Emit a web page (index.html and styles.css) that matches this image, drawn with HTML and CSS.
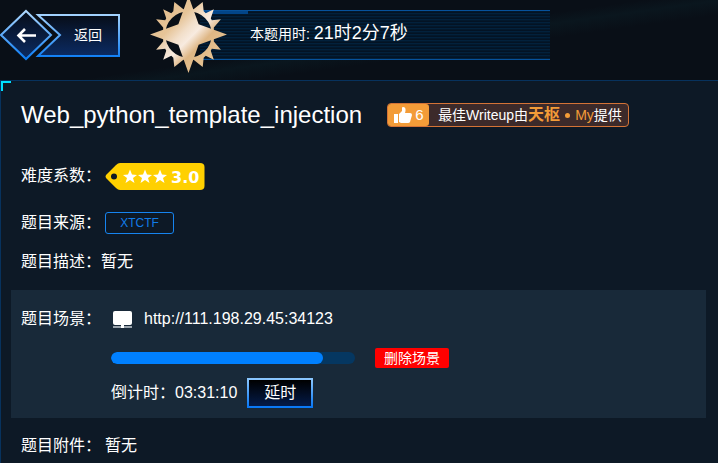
FILE: index.html
```html
<!DOCTYPE html>
<html lang="zh-CN">
<head>
<meta charset="utf-8">
<meta name="viewport" content="width=device-width, initial-scale=1">
<title>Web_python_template_injection</title>
<link rel="stylesheet" href="styles.css">
</head>
<body>
<header class="topbar">
  <button class="back" type="button">
    <svg class="back-frame" viewBox="0 0 120 52" aria-hidden="true">
      <defs>
        <linearGradient id="edge" gradientUnits="userSpaceOnUse" x1="0" y1="0" x2="0" y2="50">
          <stop offset="0" stop-color="#b5dcff"/><stop offset="1" stop-color="#0a7cf5"/>
        </linearGradient>
        <linearGradient id="fill" x1="0" y1="0" x2="0" y2="1">
          <stop offset="0" stop-color="#070d18"/><stop offset="1" stop-color="#0b2b63"/>
        </linearGradient>
      </defs>
      <path d="M38 6H119V47H38L60 26Z" fill="url(#fill)" stroke="url(#edge)" stroke-width="2"/>
      <path d="M26 2L51 26L26 50L1 26Z" fill="url(#fill)" stroke="url(#edge)" stroke-width="2"/>
      <path d="M36 26.500H20M25 20L18.500 26.500L25 33" fill="none" stroke="#fff" stroke-width="2.600"/>
    </svg>
    <span class="back-label">返回</span>
  </button>
  <div class="timer">
    <svg class="star" viewBox="0 0 76 76" aria-hidden="true">
      <defs>
        <linearGradient id="gold" gradientUnits="userSpaceOnUse" x1="8" y1="8" x2="68" y2="68">
          <stop offset="0" stop-color="#e2bc8c"/><stop offset=".3" stop-color="#e6c498"/><stop offset=".44" stop-color="#f2dfca"/><stop offset=".54" stop-color="#f8ebe0"/><stop offset=".68" stop-color="#deb684"/><stop offset="1" stop-color="#ecca9a"/>
        </linearGradient>
      </defs>
      <path fill="url(#gold)" fill-rule="evenodd" d="M24 6L33 13H43L52 6L53 15L55 17L63 13L60 22L61 24L70 23L63 31V45L70 53L61 52L60 54L63 63L55 59L53 61L52 70L43 63H33L24 70L23 61L21 59L13 63L16 54L15 52L6 53L13 45V31L6 23L15 24L16 22L13 13L21 17L23 15ZM38 15A23 23 0 1 0 38 61A23 23 0 1 0 38 15Z"/>
      <path fill="url(#gold)" d="M38 0L48 28L76 38L48 48L38 76L28 48L0 38L28 28Z"/>
    </svg>
    <p class="timer-text">本题用时: <span class="timer-value">21时2分7秒</span></p>
  </div>
</header>
<main class="panel">
  <div class="heading">
    <h1>Web_python_template_injection</h1>
    <div class="writeup">
      <span class="likes">
        <svg width="18" height="17" viewBox="0 0 18 17" aria-hidden="true"><path fill="#fff" d="M0 7h4v9H0zM5 15V7L8 4V1Q8 0 9 0Q12 0 11.500 4L11 6H16Q18 6 18 8L16 15Q15.500 16 14 16H7Z"/></svg>
        6
      </span>
      <span class="credit">最佳Writeup由<b>天枢</b><i class="dot"></i><em>My</em>提供</span>
    </div>
  </div>
  <div class="row difficulty">
    <span class="label">难度系数：</span>
    <svg class="tag" width="100" height="27" viewBox="0 0 100 27" role="img" aria-label="3.0">
      <path fill="#ffd000" fill-rule="evenodd" d="M15 0H95Q99.500 0 99.500 4V23Q99.500 27 95 27H15Q13 27 11 25L1 15Q0 13.500 1 12L11 2Q13 0 15 0ZM9 10.500A3 3 0 1 0 9 16.500A3 3 0 1 0 9 10.500Z"/>
      <g fill="#fff">
        <path id="s" d="M25 6.500L27 11.500L32 12L28 15L29.500 20L25 17L20.500 20L22 15L18 12L23 11.500Z"/>
        <use href="#s" x="15"/><use href="#s" x="30"/>
        <text class="score" x="66" y="20">3.0</text>
      </g>
    </svg>
  </div>
  <div class="row source">
    <span class="label">题目来源：</span>
    <a class="source-link" href="#">XTCTF</a>
  </div>
  <div class="row description"><span>题目描述：暂无</span></div>
  <section class="scene">
    <span class="label">题目场景：</span>
    <div class="scene-body">
      <div class="address">
        <svg width="19" height="17" viewBox="0 0 19 17" aria-hidden="true"><rect width="19" height="14" rx="2" fill="#fff"/><path d="M0 15h19v2H0z" fill="#9aa4ad"/><path d="M8 14h3v3H8z" fill="#fff"/></svg>
        <span>http://111.198.29.45:34123</span>
      </div>
      <div class="life">
        <div class="track"><div class="bar" style="width:87%"></div></div>
        <button class="delete" type="button">删除场景</button>
      </div>
      <div class="countdown"><span>倒计时：03:31:10</span><button class="extend" type="button">延时</button></div>
    </div>
  </section>
  <div class="row attachment"><span class="label">题目附件：</span><span>暂无</span></div>
</main>
</body>
</html>
```
FILE: styles.css
```css
* { box-sizing: border-box; }
body {
  margin: 0;
  min-height: 100vh;
  display: flex;
  flex-direction: column;
  background: #090f17;
  color: #fff;
  font: 16px/24px "Liberation Sans", "Noto Sans CJK SC", sans-serif;
}
h1, p { margin: 0; }
button { font: inherit; color: inherit; cursor: pointer; }

.topbar {
  display: flex;
  align-items: flex-start;
  gap: 30px;
  height: 80px;
  background: linear-gradient(172deg, transparent 50%, #0a161e 56%, transparent 64%), #090f17;
}
.back {
  position: relative;
  width: 120px;
  height: 52px;
  margin-top: 9px;
  padding: 0 18px 0 0;
  border: 0;
  background: none;
  text-align: right;
  font-size: 14px;
}
.back-frame { position: absolute; inset: 0; width: 100%; height: 100%; }
.back-label { position: relative; }

.timer {
  position: relative;
  width: 400px;
  height: 50px;
  margin-top: 10px;
  padding-left: 50px;
}
.timer-text {
  height: 50px;
  padding-left: 50px;
  border-top: 1px solid #06529c;
  border-bottom: 1px solid #06529c;
  background:
    linear-gradient(#024588, #024588) 0 0 / 48px 3px no-repeat,
    repeating-linear-gradient(#02182c 0 1px, #031324 1px 2px, #02213c 2px 3px);
  font-size: 14px;
  line-height: 44px;
}
.timer-value { font-size: 18px; }
.star { position: absolute; left: 0; top: -14px; width: 77px; height: 77px; }

.panel {
  position: relative;
  flex: 1;
  padding: 15px 12px 0 10px;
  border-top: 1px solid #07325d;
  border-left: 1px solid #07325d;
  background: #0d1926;
}
.panel::before {
  content: "";
  position: absolute;
  left: 0;
  top: 0;
  width: 8px;
  height: 8px;
  border: solid #00dfff;
  border-width: 2px 0 0 2px;
}
.heading { display: flex; align-items: center; gap: 25px; height: 38px; padding-left: 10px; }
h1 { font-size: 24px; line-height: 32px; font-weight: 400; }
.writeup {
  display: flex;
  height: 24px;
  border: 1px solid #d47336;
  border-radius: 4px;
  background: #3c2a2a;
  line-height: 22px;
  font-size: 14px;
  white-space: nowrap;
}
.likes {
  display: flex;
  align-items: center;
  gap: 3px;
  width: 41px;
  padding-left: 6px;
  border-radius: 3px;
  background: #f39c38;
  font-size: 15px;
}
.credit { display: flex; align-items: center; padding: 0 6px 0 9px; }
.credit b { font-size: 16px; color: #f39c38; }
.credit em { font-style: normal; color: #f39c38; }
.dot { width: 5px; height: 5px; margin: 0 5px; border-radius: 50%; background: #f39c38; }

.row { display: flex; align-items: center; padding-left: 10px; height: 28px; }
.label { flex: none; width: 84px; white-space: nowrap; }
.difficulty { margin-top: 28px; }
.source { margin-top: 19px; }
.description { margin-top: 11px; }
.attachment { margin-top: 14px; }
.score { font: 700 16px "DejaVu Sans", sans-serif; }
.source-link {
  width: 69px;
  height: 22px;
  border: 1px solid #1684ef;
  border-radius: 3px;
  color: #127ce8;
  font-size: 12px;
  line-height: 20px;
  text-align: center;
  text-decoration: none;
}
.scene {
  display: flex;
  margin-top: 14px;
  padding: 17px 10px 10px;
  background: #182939;
}
.scene-body { flex: 1; padding-left: 6px; }
.address { display: flex; align-items: center; gap: 12px; height: 24px; padding-left: 2px; }
.life { display: flex; align-items: center; gap: 20px; margin-top: 17px; }
.track { width: 244px; height: 12px; border-radius: 6px; background: #053761; overflow: hidden; }
.bar { height: 100%; border-radius: 6px; background: #0080ff; }
.delete {
  width: 74px;
  height: 20px;
  padding: 0;
  border: 0;
  border-radius: 2px;
  background: #f00;
  font-size: 14px;
  line-height: 20px;
}
.countdown { display: flex; align-items: center; gap: 10px; margin-top: 10px; }
.extend {
  width: 66px;
  height: 30px;
  padding: 0;
  border: 2px solid;
  border-image: linear-gradient(#8bc7ff, #0878f5) 1;
  background: linear-gradient(#000, #041b48);
}
```
